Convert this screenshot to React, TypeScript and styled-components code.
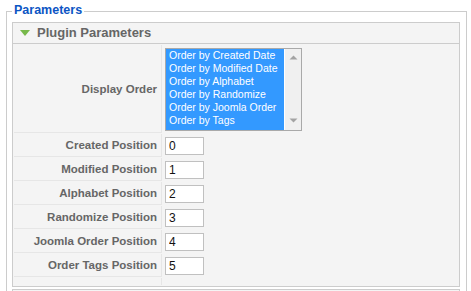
import React from 'react';
import styled, { createGlobalStyle } from 'styled-components';

const Global = createGlobalStyle`
  html, body { margin: 0; padding: 0; background: #fff; }
  body {
    font-family: "Liberation Sans", Arial, Helvetica, sans-serif;
    font-size: 11px;
    overflow: hidden;
  }
`;

const Fieldset = styled.fieldset`
  box-sizing: border-box;
  width: 461px;
  margin: 3px 0 0 6px;
  padding: 2px 6px 0 5px;
  border: 1px solid #cccccc;
  min-inline-size: 0;
`;

const Legend = styled.legend`
  padding: 0 2px 3px;
  font: bold 12.5px/14px "Liberation Sans", Arial, sans-serif;
  color: #0b55c4;
`;

const Panel = styled.div`
  border: 1px solid #cccccc;
  margin-bottom: 2px;
  background: #f4f4f4;
`;

const PanelHeader = styled.h3`
  margin: 0;
  height: 20px;
  display: flex;
  align-items: center;
  gap: 7px;
  padding-left: 7px;
  border-bottom: 1px solid #cccccc;
  background: #f4f4f4;
  font: bold 13px/20px "Liberation Sans", Arial, sans-serif;
  color: #666666;
`;

const ParamTable = styled.div`
  display: grid;
  grid-template-columns: 148px 1fr;
  row-gap: 1px;
  padding: 1px 0 1px 1px;
`;

const Label = styled.div<{ $h: number }>`
  box-sizing: border-box;
  height: ${(p) => p.$h}px;
  display: flex;
  align-items: center;
  justify-content: flex-end;
  padding-right: 4px;
  border-right: 1px solid #e6e6e6;
  border-bottom: ${(p) => (p.$h > 10 ? '1px solid #e6e6e6' : 'none')};
  background: #f4f4f4;
  font: bold 11.5px "Liberation Sans", Arial, sans-serif;
  color: #666666;
  white-space: nowrap;
`;

const Value = styled.div`
  display: flex;
  align-items: center;
  padding-left: 3px;
`;

const Listbox = styled.div`
  box-sizing: border-box;
  width: 137px;
  height: 83px;
  border: 1px solid #a9a9a9;
  display: flex;
  background: #fff;
`;

const Options = styled.div`
  flex: 1;
  background: #3399ff;
  border-right: 1px solid #ffffff;
`;

const Option = styled.div`
  height: 13px;
  line-height: 13px;
  padding-left: 3px;
  color: #ffffff;
  font: 10.5px/13px "Liberation Sans", Arial, sans-serif;
  white-space: nowrap;
`;

const Scrollbar = styled.div`
  width: 16px;
  background: #f0f0f0;
  display: flex;
  flex-direction: column;
  justify-content: space-between;
  align-items: center;
  padding: 6px 0 7px;
  box-sizing: border-box;
`;

const TextInput = styled.input`
  box-sizing: border-box;
  width: 39px;
  height: 18px;
  margin: 0;
  padding: 0 3px;
  border: 1px solid #c0c0c0;
  background: #fff;
  color: #111;
  font: 12px "Liberation Sans", Arial, sans-serif;
  outline: none;
`;

const Arrow = ({ up }: { up?: boolean }) => (
  <svg width="9" height="5" viewBox="0 0 9 5">
    <path d={up ? 'M0.5 4.5 L4.5 0.5 L8.5 4.5 Z' : 'M0.5 0.5 L8.5 0.5 L4.5 4.5 Z'} fill="#a3a3a3" />
  </svg>
);

const Toggle = () => (
  <svg width="10" height="6" viewBox="0 0 10 6">
    <path d="M0 0 L10 0 L5 6 Z" fill="#77b84a" />
  </svg>
);

const orders = [
  'Order by Created Date',
  'Order by Modified Date',
  'Order by Alphabet',
  'Order by Randomize',
  'Order by Joomla Order',
  'Order by Tags',
];

const positions: [string, string][] = [
  ['Created Position', '0'],
  ['Modified Position', '1'],
  ['Alphabet Position', '2'],
  ['Randomize Position', '3'],
  ['Joomla Order Position', '4'],
  ['Order Tags Position', '5'],
];

export default function App() {
  return (
    <>
      <Global />
      <Fieldset>
        <Legend>Parameters</Legend>
        <Panel>
          <PanelHeader>
            <Toggle />
            Plugin Parameters
          </PanelHeader>
          <ParamTable>
            <Label $h={88}>Display Order</Label>
            <Value>
              <Listbox>
                <Options>
                  {orders.map((o) => (
                    <Option key={o}>{o}</Option>
                  ))}
                </Options>
                <Scrollbar>
                  <Arrow up />
                  <Arrow />
                </Scrollbar>
              </Listbox>
            </Value>
            {positions.map(([label, val]) => (
              <React.Fragment key={label}>
                <Label $h={23}>{label}</Label>
                <Value>
                  <TextInput defaultValue={val} readOnly />
                </Value>
              </React.Fragment>
            ))}
            <Label $h={7} />
            <Value />
          </ParamTable>
        </Panel>
        <Panel>
          <PanelHeader />
        </Panel>
      </Fieldset>
    </>
  );
}
